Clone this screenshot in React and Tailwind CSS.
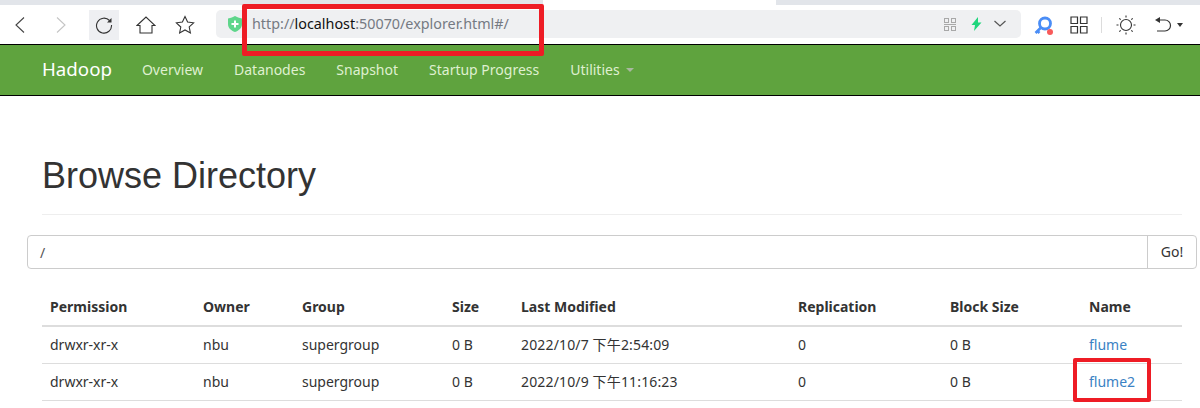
import React from "react";

const navLinks = ["Overview", "Datanodes", "Snapshot", "Startup Progress"];

const columns = [
  { label: "Permission", width: "w-[153px]" },
  { label: "Owner", width: "w-[99px]" },
  { label: "Group", width: "w-[150px]" },
  { label: "Size", width: "w-[69px]" },
  { label: "Last Modified", width: "w-[277px]" },
  { label: "Replication", width: "w-[152px]" },
  { label: "Block Size", width: "w-[139px]" },
  { label: "Name", width: "w-[101px]" },
];

const rows = [
  ["drwxr-xr-x", "nbu", "supergroup", "0 B", "2022/10/7 下午2:54:09", "0", "0 B", "flume"],
  ["drwxr-xr-x", "nbu", "supergroup", "0 B", "2022/10/9 下午11:16:23", "0", "0 B", "flume2"],
];

const cellClass = (i) => {
  if (i === 7) return "px-2 text-[#3b82c4]";
  if (i === 4) return "px-2 tracking-[0.15px]";
  return "px-2";
};

const Toolbar = () => (
  <div className="flex h-[39px] items-center bg-white">
    <button className="flex w-[38px] justify-center pl-[1px]">
      <svg width="14" height="18" viewBox="0 0 14 18" fill="none" stroke="#444" strokeWidth="1.1">
        <path d="M11 1.500 3 9l8 7.500" />
      </svg>
    </button>
    <button className="flex w-[46px] justify-center">
      <svg width="14" height="18" viewBox="0 0 14 18" fill="none" stroke="#c4c4c4" strokeWidth="1.1">
        <path d="M3 1.500 11 9l-8 7.500" />
      </svg>
    </button>
    <button className="ml-[5px] mt-[1px] flex h-[30px] w-[30px] items-center justify-center bg-[#eeeff2]">
      <svg width="18" height="18" viewBox="0 0 18 18" fill="none" stroke="#333" strokeWidth="1.1">
        <path d="M14.500 4.500A7.500 7.500 0 1 0 16.500 9" />
        <path d="M16.500 2v4.500H12z" fill="#333" stroke="none" />
      </svg>
    </button>
    <button className="ml-[12px] flex w-[30px] justify-center">
      <svg width="20" height="18" viewBox="0 0 20 18" fill="none" stroke="#333" strokeWidth="1.1">
        <path d="M1 9.500 10 1l9 8.500h-3V17H4V9.500z" />
      </svg>
    </button>
    <button className="ml-[9px] flex w-[30px] justify-center">
      <svg width="20" height="20" viewBox="0 0 20 20" fill="none" stroke="#333" strokeWidth="1.1">
        <path d="m10 1.500 2.600 5.600 6 .7-4.400 4.100 1.200 6L10 15l-5.400 3 1.200-6-4.400-4.200 6-.7z" />
      </svg>
    </button>
    <div className="mb-[1px] ml-[16px] flex h-[28px] w-[805px] items-center rounded-[5px] bg-[#eff0f2] pl-[12px] pr-[15px]">
      <svg width="14" height="16" viewBox="0 0 14 16">
        <path d="M0 2.500C3 2 5 1.200 7 0c2 1.200 4 2 7 2.500V8c0 4-3 6.500-7 8-4-1.500-7-4-7-8z" fill="#5fd68b" />
        <path d="M7 4.500v7M3.500 8h7" stroke="#fff" strokeWidth="2" />
      </svg>
      <span className="ml-[10px] text-[14.35px] text-[#757a82]">
        http://<span className="text-[#111]">localhost</span>:50070/explorer.html#/
      </span>
      <svg className="ml-auto" width="12" height="13" viewBox="0 0 12 13" fill="#a8a8a8">
        <path d="M0 0h5v5H0zm1 1v3h3V1zM7 0h5v5H7zm1 1v3h3V1zM0 6h12v1H0zM0 8h5v5H0zm1 1v3h3V9zM7 8h5v5H7zm1 1v3h3V9z" fillRule="evenodd" />
      </svg>
      <svg className="ml-[15px]" width="11" height="14" viewBox="0 0 11 14">
        <path d="M7 0 .5 8H4l-1 6 7.500-8.500H7z" fill="#1fd67c" />
      </svg>
      <svg className="ml-[12px]" width="12" height="8" viewBox="0 0 12 8" fill="none" stroke="#555" strokeWidth="1.2">
        <path d="m.5 1 5.500 5 5.500-5" />
      </svg>
    </div>
    <button className="ml-[13px] mt-[2px] flex w-[20px] justify-center">
      <svg width="20" height="20" viewBox="0 0 20 20" fill="none">
        <circle cx="11" cy="7.500" r="5.500" stroke="#4a8df6" strokeWidth="2.800" />
        <path d="M7 11.500 1.500 17M3.500 15l2 2" stroke="#4a8df6" strokeWidth="2.600" />
        <circle cx="16" cy="16" r="3" fill="#f85a5a" />
      </svg>
    </button>
    <button className="ml-[16px] flex w-[18px] justify-center">
      <svg width="18" height="18" viewBox="0 0 18 18" fill="none" stroke="#333" strokeWidth="1.2">
        <path d="M1 1h6.500v6.500H1zM10.500 1H17v6.500h-6.500zM1 10.500h6.500V17H1zM10.500 10.500H17V17h-6.500z" />
      </svg>
    </button>
    <div className="ml-[13px] h-[16px] w-px bg-[#dcdcdc]" />
    <button className="ml-[14px] flex w-[20px] justify-center">
      <svg width="20" height="20" viewBox="0 0 20 20" fill="none" stroke="#333" strokeWidth="1.1">
        <circle cx="10" cy="10" r="5.500" />
        <path d="M10 .5v2M10 17.500v2M.5 10h2M17.500 10h2M3.300 3.300l1.400 1.400M15.300 15.300l1.400 1.400M3.300 16.700l1.400-1.400M15.300 4.700l1.400-1.400" />
      </svg>
    </button>
    <button className="ml-[18px] flex items-center">
      <svg width="18" height="18" viewBox="0 0 18 18" fill="none" stroke="#333" strokeWidth="1.2">
        <path d="M5 4h6a5.500 5.500 0 0 1 0 11H3" />
        <path d="M6 1v6L1 4z" fill="#333" stroke="none" />
      </svg>
      <span className="ml-[5px] h-0 w-0 border-x-[3px] border-t-[4px] border-x-transparent border-t-[#333]" />
    </button>
  </div>
);

const App = () => {
  return (
    <div className="relative h-[408px] w-[1200px] overflow-hidden bg-white font-['Noto_Sans','Noto_Sans_CJK_SC',sans-serif] text-[14px] text-[#333]">
      {/* window strip at the very top */}
      <div className="flex h-[5px]">
        <div className="w-[543px] bg-[#e2e5ea]" />
        <div className="w-[233px] bg-white" />
        <div className="flex-1 bg-[#e2e5ea]" />
      </div>
      <Toolbar />

      <nav className="flex h-[52px] items-center border-y border-black bg-[#5fa33e] pb-[2px] pl-[42px]">
        <a className="mr-[30px] text-[18.7px] text-white">Hadoop</a>
        {navLinks.map((link) => (
          <a key={link} className="mr-[31px] text-[#dff0d0]">
            {link}
          </a>
        ))}
        <a className="flex items-center text-[#dff0d0]">
          Utilities
          <span className="ml-[6px] mt-[2px] h-0 w-0 border-x-[4px] border-t-[4px] border-x-transparent border-t-[#a9b8a0]" />
        </a>
      </nav>

      <div className="pl-[42px]">
        <h1 className="mt-[59px] h-[41px] font-['Liberation_Sans',sans-serif] text-[36px] leading-[41px]">
          Browse Directory
        </h1>
        <div className="mt-[18px] h-px w-[1140px] bg-[#eeeeee]" />
      </div>

      <div className="ml-[27px] mt-[20px] flex h-[34px] w-[1170px] rounded border border-[#cccccc]">
        <div className="flex-1 pl-[12px] pt-[1px] leading-[32px] text-[#555]">/</div>
        <div className="w-[49px] border-l border-[#cccccc] text-center leading-[32px]">Go!</div>
      </div>

      <table className="ml-[42px] mt-[18px] w-[1140px] table-fixed border-collapse">
        <thead>
          <tr className="h-[39px] border-b-2 border-[#dddddd]">
            {columns.map((col) => (
              <th key={col.label} className={`${col.width} px-2 text-left font-bold`}>
                {col.label}
              </th>
            ))}
          </tr>
        </thead>
        <tbody>
          {rows.map((row) => (
            <tr key={row[7]} className="h-[37px] border-b border-[#dddddd]">
              {row.map((cell, i) => (
                <td key={i} className={cellClass(i)}>
                  {cell}
                </td>
              ))}
            </tr>
          ))}
        </tbody>
      </table>

      {/* red annotation boxes drawn over the screenshot */}
      <div className="absolute left-[242px] top-[4px] h-[52px] w-[302px] rounded-[2px] border-[5px] border-[#ee1c25]" />
      <div className="absolute left-[1073px] top-[358px] h-[44px] w-[78px] rounded-[2px] border-[4px] border-[#ee1c25]" />
    </div>
  );
};

export default App;
